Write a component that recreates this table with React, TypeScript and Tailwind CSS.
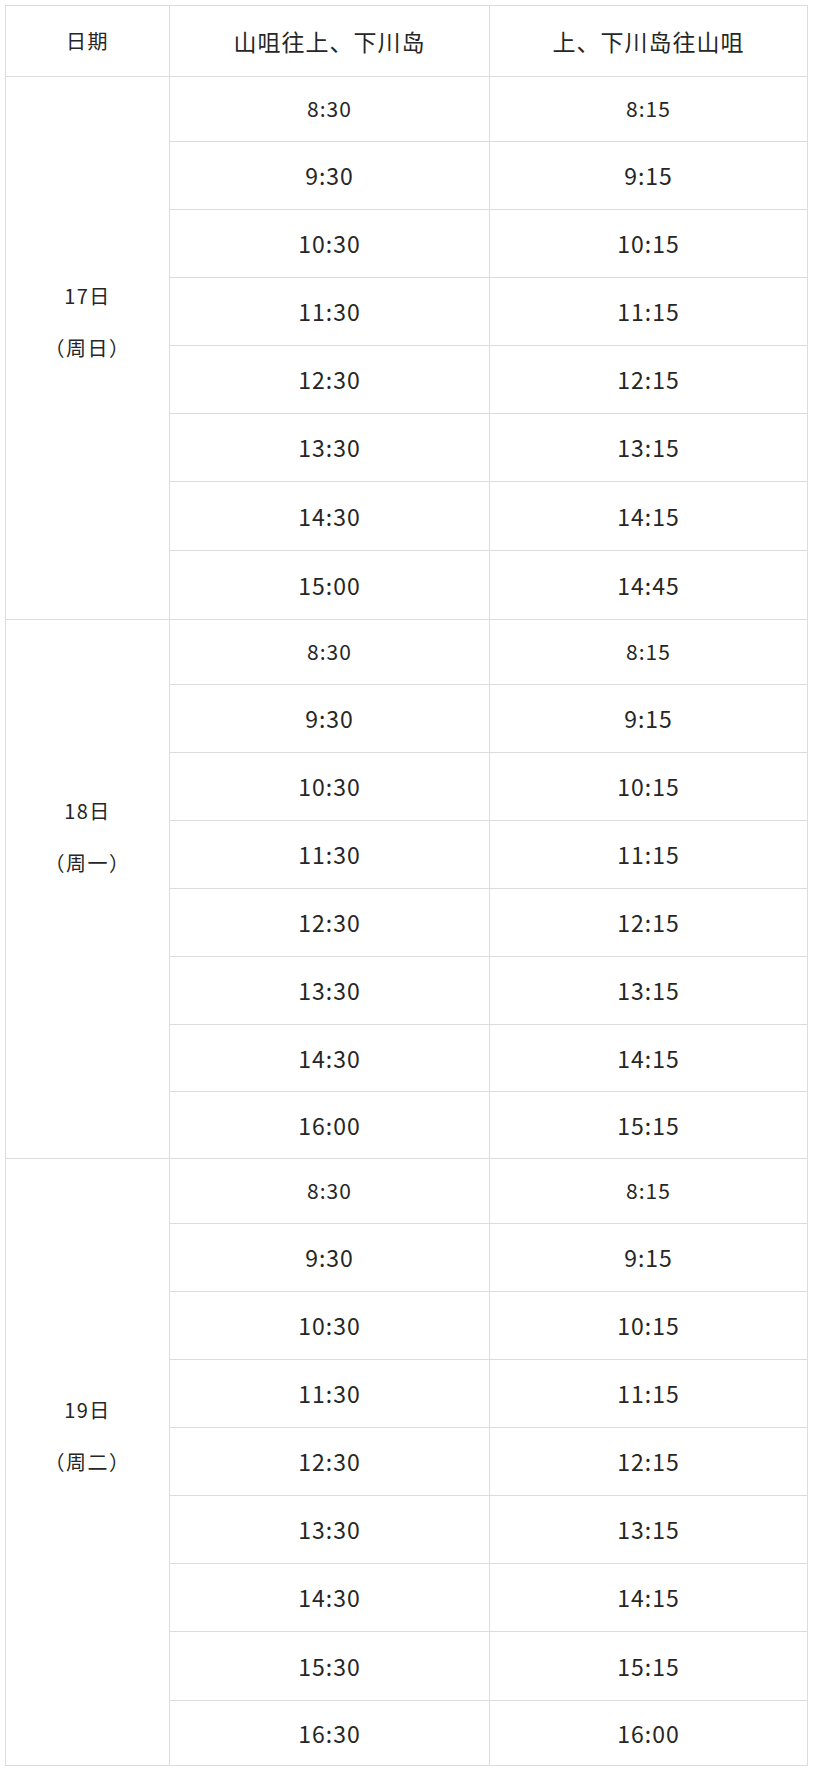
import React from 'react';

type Trip = { out: string; back: string; h: number };

type Day = { lines: string[]; trips: Trip[] };

// pitch of each row (includes its top border)
const days: Day[] = [
  {
    lines: ['17日', '（周日）', ''],
    trips: [
      { out: '8:30', back: '8:15', h: 65 },
      { out: '9:30', back: '9:15', h: 68 },
      { out: '10:30', back: '10:15', h: 68 },
      { out: '11:30', back: '11:15', h: 68 },
      { out: '12:30', back: '12:15', h: 68 },
      { out: '13:30', back: '13:15', h: 68 },
      { out: '14:30', back: '14:15', h: 69 },
      { out: '15:00', back: '14:45', h: 69 },
    ],
  },
  {
    lines: ['18日', '（周一）', '', ''],
    trips: [
      { out: '8:30', back: '8:15', h: 65 },
      { out: '9:30', back: '9:15', h: 68 },
      { out: '10:30', back: '10:15', h: 68 },
      { out: '11:30', back: '11:15', h: 68 },
      { out: '12:30', back: '12:15', h: 68 },
      { out: '13:30', back: '13:15', h: 68 },
      { out: '14:30', back: '14:15', h: 67 },
      { out: '16:00', back: '15:15', h: 67 },
    ],
  },
  {
    lines: ['19日', '（周二）', ''],
    trips: [
      { out: '8:30', back: '8:15', h: 65 },
      { out: '9:30', back: '9:15', h: 68 },
      { out: '10:30', back: '10:15', h: 68 },
      { out: '11:30', back: '11:15', h: 68 },
      { out: '12:30', back: '12:15', h: 68 },
      { out: '13:30', back: '13:15', h: 68 },
      { out: '14:30', back: '14:15', h: 68 },
      { out: '15:30', back: '15:15', h: 69 },
      { out: '16:30', back: '16:00', h: 65 },
    ],
  },
];

function TripRow({ trip, first }: { trip: Trip; first: boolean }) {
  const size = first ? 'text-[21px]' : 'text-[23px]';
  return (
    <div className="grid grid-cols-[320px_1fr] border-t border-[#dcdcdc] tracking-[1px]" style={{ height: trip.h }}>
      <div className={`flex items-center justify-center border-r border-[#dcdcdc] ${size}`}>{trip.out}</div>
      <div className={`flex items-center justify-center ${size}`}>{trip.back}</div>
    </div>
  );
}

export default function App() {
  return (
    <div className="min-h-screen bg-white pt-[5px] pl-[5px]">
      <div
        className="w-[803px] border border-[#dcdcdc] text-[#262626]"
        style={{ fontFamily: '"Noto Sans CJK SC", "Noto Sans", sans-serif' }}
      >
        {/* header */}
        <div className="grid h-[70px] grid-cols-[164px_320px_1fr] tracking-[1px]">
          <div className="flex items-center justify-center border-r border-[#dcdcdc] text-[20px] tracking-[1.5px]">日期</div>
          <div className="flex items-center justify-center border-r border-[#dcdcdc] text-[23px]">山咀往上、下川岛</div>
          <div className="flex items-center justify-center text-[23px]">上、下川岛往山咀</div>
        </div>

        {days.map((day, i) => (
          <div key={i} className="grid grid-cols-[164px_1fr]">
            <div className="flex flex-col items-center justify-center border-t border-r border-[#dcdcdc] text-[20px] tracking-[1.5px]">
              {day.lines.map((line, j) => (
                <div key={j} className="flex h-[52px] items-center">
                  {line}
                </div>
              ))}
            </div>
            <div>
              {day.trips.map((t, j) => (
                <TripRow key={j} trip={t} first={j === 0} />
              ))}
            </div>
          </div>
        ))}
      </div>
    </div>
  );
}
